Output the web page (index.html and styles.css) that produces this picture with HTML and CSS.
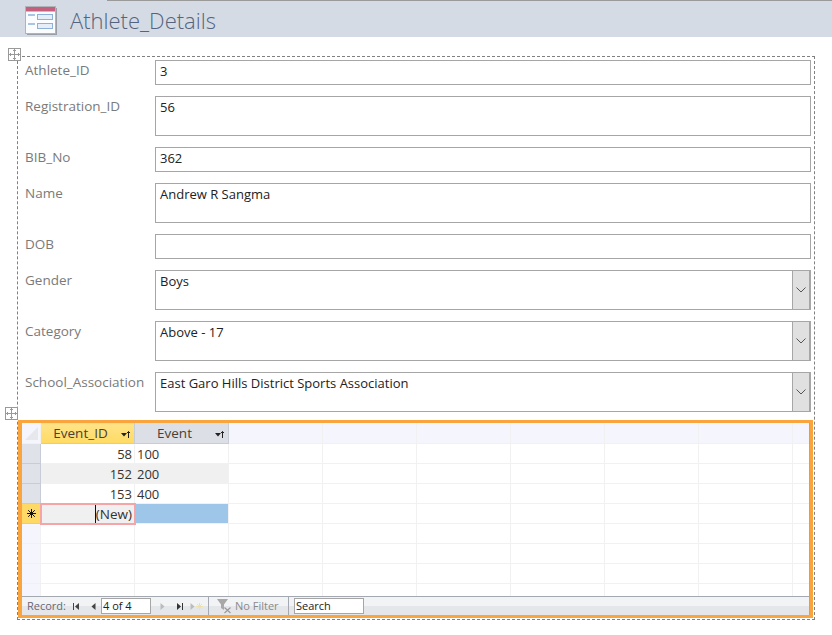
FILE: index.html
```html
<!DOCTYPE html>
<html lang="en">
<head>
    <meta charset="UTF-8">
    <title>Athlete_Details</title>
    <link rel="stylesheet" href="styles.css">
</head>
<body>
    <div class="top-line"></div>
    <header class="title-bar">
        <svg class="form-icon" width="32" height="29" viewBox="0 0 32 29">
            <rect x="2" y="2" width="30" height="27" fill="#9a9ea6"/>
            <rect x="0.5" y="0.5" width="30" height="27" fill="#fbfcfe" stroke="#b0b3ba"/>
            <rect x="1" y="1" width="29" height="4" fill="#c4607e"/>
            <rect x="1" y="5" width="29" height="1" fill="#e3b0bf"/>
            <rect x="3" y="8" width="7" height="2" fill="#a9c4e4"/>
            <rect x="12.5" y="8.5" width="15" height="5" fill="#e6eef8" stroke="#8fb0d8"/>
            <rect x="3" y="17" width="7" height="2" fill="#a9c4e4"/>
            <rect x="12.5" y="17.5" width="15" height="5" fill="#e6eef8" stroke="#8fb0d8"/>
        </svg>
        <h1>Athlete_Details</h1>
    </header>

    <main class="form-box">
        <span class="handle handle-form">
            <svg width="11" height="11" viewBox="0 0 11 11"><path d="M5.5 0v11M0 5.5h11M4 1.5h3M4 9.5h3M1.5 4v3M9.5 4v3" stroke="#999" fill="none"/></svg>
        </span>

        <div class="field short"><label>Athlete_ID</label><div class="input">3</div></div>
        <div class="field tall"><label>Registration_ID</label><div class="input">56</div></div>
        <div class="field short"><label>BIB_No</label><div class="input">362</div></div>
        <div class="field tall"><label>Name</label><div class="input">Andrew R Sangma</div></div>
        <div class="field short"><label>DOB</label><div class="input"></div></div>
        <div class="field tall"><label>Gender</label><div class="input combo">Boys<span class="combo-btn"><svg width="10" height="6" viewBox="0 0 10 6"><path d="M0.5 0.5L5 5L9.5 0.5" stroke="#555" fill="none"/></svg></span></div></div>
        <div class="field tall"><label>Category</label><div class="input combo">Above - 17<span class="combo-btn"><svg width="10" height="6" viewBox="0 0 10 6"><path d="M0.5 0.5L5 5L9.5 0.5" stroke="#555" fill="none"/></svg></span></div></div>
        <div class="field tall"><label>School_Association</label><div class="input combo">East Garo Hills District Sports Association<span class="combo-btn"><svg width="10" height="6" viewBox="0 0 10 6"><path d="M0.5 0.5L5 5L9.5 0.5" stroke="#555" fill="none"/></svg></span></div></div>

        <span class="handle handle-sub">
            <svg width="11" height="11" viewBox="0 0 11 11"><path d="M5.5 0v11M0 5.5h11M4 1.5h3M4 9.5h3M1.5 4v3M9.5 4v3" stroke="#999" fill="none"/></svg>
        </span>

        <section class="subform">
            <div class="sheet">
                <div class="grid-wrap">
                    <table>
                        <thead>
                            <tr>
                                <th class="corner"><svg width="19" height="20" viewBox="0 0 19 20"><path d="M3 17L16 4V17Z" fill="#e6e8ec"/></svg></th>
                                <th class="col-head active">Event_ID<span class="sort"><svg width="9" height="7" viewBox="0 0 9 7"><path d="M0 2h6L3 5.5Z" fill="#222"/><path d="M7.5 0.5v6.5M6 2l1.5-1.5L9 2" stroke="#222" fill="none"/></svg></span></th>
                                <th class="col-head">Event<span class="sort"><svg width="9" height="7" viewBox="0 0 9 7"><path d="M0 2h6L3 5.5Z" fill="#222"/><path d="M7.5 0.5v6.5M6 2l1.5-1.5L9 2" stroke="#222" fill="none"/></svg></span></th>
                                <th></th><th></th><th></th><th></th><th></th><th></th><th class="rest"></th>
                            </tr>
                        </thead>
                        <tbody>
                            <tr><td class="sel"></td><td class="num">58</td><td>100</td><td></td><td></td><td></td><td></td><td></td><td></td><td class="rest"></td></tr>
                            <tr><td class="sel"></td><td class="num alt">152</td><td class="alt">200</td><td></td><td></td><td></td><td></td><td></td><td></td><td class="rest"></td></tr>
                            <tr><td class="sel"></td><td class="num">153</td><td>400</td><td></td><td></td><td></td><td></td><td></td><td></td><td class="rest"></td></tr>
                            <tr>
                                <td class="sel star">
                                    <svg width="9" height="9" viewBox="0 0 9 9"><path d="M4.5 0v9M0 4.5h9M1.2 1.2l6.6 6.6M7.8 1.2l-6.6 6.6" stroke="#111"/></svg>
                                </td>
                                <td class="num current"><span class="caret">(New)</span></td>
                                <td class="picked"></td>
                                <td></td><td></td><td></td><td></td><td></td><td></td><td class="rest"></td>
                            </tr>
                            <tr class="blank"><td></td><td></td><td></td><td></td><td></td><td></td><td></td><td></td><td></td><td class="rest"></td></tr>
                            <tr class="blank"><td></td><td></td><td></td><td></td><td></td><td></td><td></td><td></td><td></td><td class="rest"></td></tr>
                            <tr class="blank"><td></td><td></td><td></td><td></td><td></td><td></td><td></td><td></td><td></td><td class="rest"></td></tr>
                            <tr class="blank"><td></td><td></td><td></td><td></td><td></td><td></td><td></td><td></td><td></td><td class="rest"></td></tr>
                        </tbody>
                    </table>
                </div>
                <footer class="nav-bar">
                    <div class="nav-group records">
                        <span class="nav-label">Record:</span>
                        <svg class="nav-first" width="7" height="7" viewBox="0 0 7 7"><path d="M0.5 0v7" stroke="#444"/><path d="M6 0v7L2 3.5Z" fill="#444"/></svg>
                        <svg class="nav-prev" width="5" height="7" viewBox="0 0 5 7"><path d="M4.5 0v7L0.5 3.5Z" fill="#444"/></svg>
                        <div class="nav-input">4 of 4</div>
                        <svg class="nav-next" width="5" height="7" viewBox="0 0 5 7"><path d="M0.5 0v7L4.5 3.5Z" fill="#bbb"/></svg>
                        <svg class="nav-last" width="7" height="7" viewBox="0 0 7 7"><path d="M1 0v7L5 3.5Z" fill="#333"/><path d="M6.5 0v7" stroke="#333"/></svg>
                        <svg class="nav-new" width="13" height="7" viewBox="0 0 13 7"><path d="M0.5 0v7L4.5 3.5Z" fill="#bbb"/><path d="M9.5 0v7M6 3.5h7M7 1l5 5M12 1l-5 5" stroke="#eee2a8"/></svg>
                    </div>
                    <div class="nav-group filter">
                        <svg width="15" height="16" viewBox="0 0 15 16"><path d="M0 1h11L7 6.5V12L4 10V6.5Z" fill="#a8a8a8"/><path d="M7.5 9.5l6 5.5M13.5 9.5l-6 5.5" stroke="#999" stroke-width="1.2"/></svg>
                        <span>No Filter</span>
                    </div>
                    <div class="nav-group search">
                        <div class="search-input">Search</div>
                    </div>
                </footer>
            </div>
        </section>
    </main>
</body>
</html>
```

FILE: styles.css
```css
* {
    box-sizing: border-box;
}
body {
    margin: 0;
    height: 635px;
    overflow: hidden;
    background-color: #fff;
    font-family: "Open Sans", "Noto Sans", sans-serif;
    font-size: 13px;
    line-height: 16px;
    color: #222;
    position: relative;
}
.top-line {
    position: absolute;
    top: 0;
    left: 107px;
    right: 0;
    height: 1px;
    background-color: #9a9a9a;
}
.title-bar {
    height: 37px;
    background-color: #d5dbe5;
    display: flex;
    align-items: center;
    padding-left: 25px;
}
.form-icon {
    flex: none;
    margin-top: 4px;
}
.title-bar h1 {
    margin: 3px 0 0 13px;
    font-family: "Open Sans", sans-serif;
    font-weight: 300;
    font-size: 22px;
    line-height: 30px;
    color: #54647e;
}
.form-box {
    position: relative;
    margin: 19px 0 0 17px;
    width: 798px;
    height: 564px;
    border: 1px dashed #808080;
    padding: 3px 2px 0 3px;
}
.handle {
    position: absolute;
    width: 13px;
    height: 13px;
    border: 1px solid #999;
    background-color: #fff;
    display: flex;
    align-items: center;
    justify-content: center;
}
.handle-form {
    left: -10px;
    top: -9px;
}
.handle-sub {
    left: -13px;
    top: 350px;
}
.field {
    display: flex;
    margin-bottom: 11px;
}
.field label {
    width: 134px;
    flex: none;
    padding: 2px 0 0 4px;
    font-size: 13.5px;
    color: #7a7a7a;
}
.input {
    width: 656px;
    border: 1px solid #a6a6a6;
    padding: 2px 4px;
    position: relative;
    color: #222;
}
.short .input {
    height: 25px;
}
.tall .input {
    height: 40px;
}
.combo-btn {
    position: absolute;
    top: 0;
    right: 0;
    bottom: 0;
    width: 18px;
    background-color: #e0e0e0;
    border-left: 1px solid #a6a6a6;
    border-right: 1px solid #a6a6a6;
    display: flex;
    align-items: center;
    justify-content: center;
}
.subform {
    position: absolute;
    left: 0;
    top: 363px;
    width: 795px;
    height: 198px;
    border: 3px solid #f9a43c;
    border-left-width: 4px;
}
.sheet {
    height: 100%;
    display: flex;
    flex-direction: column;
    border-right: 1px solid #a4a8b0;
}
.grid-wrap {
    flex: 1;
    overflow: hidden;
}
table {
    border-collapse: collapse;
    table-layout: fixed;
    width: 788px;
    margin: -1px 0 0 -1px;
}
th, td {
    width: 94px;
    height: 20px;
    padding: 0 2px;
    border: 1px solid #f1f1f1;
    font-weight: normal;
    color: #333;
}
th {
    height: 21px;
    background-color: #f5f6fd;
}
th:first-child, td:first-child {
    width: 19px;
}
.rest {
    width: 17px;
}
.corner {
    background-color: #f5f6fd;
    padding: 0;
}
.corner svg {
    display: block;
}
.col-head {
    background-color: #dcdfe5;
    text-align: center;
    position: relative;
    padding-right: 16px;
    border-color: #c8ccd4;
    font-size: 13.5px;
    color: #4a4038;
}
.col-head.active {
    background: linear-gradient(#ffe388, #ffdb62);
}
.sort {
    position: absolute;
    right: 4px;
    top: 8px;
    line-height: 0;
}
.sel {
    background-color: #dfe2e8;
    border-color: #c8ccd4;
}
.num {
    text-align: right;
}
.alt {
    background-color: #f0f0f0;
}
.star {
    background-color: #ffd966;
    text-align: center;
    padding: 0;
}
.star svg {
    display: block;
    margin: 0 auto;
}
.current {
    background-color: #f0f0f0;
    outline: 2px solid #f5a4a8;
    outline-offset: -1px;
    font-size: 13.5px;
}
.caret {
    border-left: 1px solid #111;
}
.picked {
    background-color: #9dc6e8;
}
.blank td:first-child {
    background-color: #f5f6fd;
}
.nav-bar {
    flex: none;
    height: 19px;
    display: flex;
    align-items: center;
    border-top: 1px solid #a4a8b0;
    background: linear-gradient(#f2f3f5 50%, #e5e6e9 50%);
    color: #667;
    font-size: 11px;
}
.nav-group {
    height: 100%;
    display: flex;
    align-items: center;
    padding-left: 5px;
}
.records, .filter {
    border-right: 1px solid #a4a8b0;
}
.records {
    width: 187px;
}
.nav-label {
    width: 46px;
    flex: none;
}
.nav-first {
    margin-right: 11px;
}
.nav-prev {
    margin-right: 5px;
}
.nav-input {
    width: 50px;
    height: 16px;
    background-color: #fff;
    border: 1px solid #a6a6a6;
    padding-left: 1px;
    line-height: 14px;
    color: #222;
    margin-right: 9px;
}
.nav-next {
    margin-right: 11px;
}
.nav-last {
    margin-right: 7px;
}
.filter {
    width: 80px;
    color: #8a8a8a;
    padding-left: 8px;
    gap: 3px;
}
.search-input {
    width: 70px;
    height: 16px;
    background-color: #fff;
    border: 1px solid #a6a6a6;
    padding-left: 1px;
    line-height: 14px;
    color: #222;
}
```
